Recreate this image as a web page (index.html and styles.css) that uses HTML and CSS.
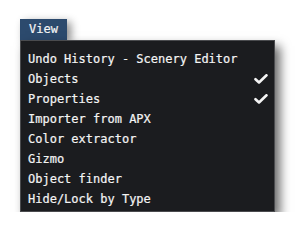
FILE: index.html
```html
<!DOCTYPE html>
<html>
<head>
<meta charset="utf-8">
<link rel="stylesheet" href="styles.css">
</head>
<body>
<div class="wrap">
  <div class="tab">View</div>
  <div class="menu">
    <div class="item"><span>Undo History - Scenery Editor</span></div>
    <div class="item"><span>Objects</span><svg class="check" viewBox="0 0 14 10" width="14" height="10"><path d="M1.5 5.2 L5 8.5 L12.5 1.3" fill="none" stroke="#f4f4f4" stroke-width="2.6" stroke-linecap="round" stroke-linejoin="round"/></svg></div>
    <div class="item"><span>Properties</span><svg class="check" viewBox="0 0 14 10" width="14" height="10"><path d="M1.5 5.2 L5 8.5 L12.5 1.3" fill="none" stroke="#f4f4f4" stroke-width="2.6" stroke-linecap="round" stroke-linejoin="round"/></svg></div>
    <div class="item"><span>Importer from APX</span></div>
    <div class="item"><span>Color extractor</span></div>
    <div class="item"><span>Gizmo</span></div>
    <div class="item"><span>Object finder</span></div>
    <div class="item"><span>Hide/Lock by Type</span></div>
  </div>
</div>
</body>
</html>
```
FILE: styles.css
```css
html, body {
  margin: 0;
  padding: 0;
  background: #ffffff;
}
body {
  font-family: "DejaVu Sans Mono", "Liberation Mono", monospace;
  font-size: 12px;
  color: #f4f4f4;
  -webkit-text-stroke: 0.2px #f4f4f4;
}
.wrap {
  padding: 19px 0 0 20px;
  display: flex;
  flex-direction: column;
  align-items: flex-start;
}
.tab {
  background: #2c4a6d;
  height: 21px;
  line-height: 21px;
  padding: 0 9px;
  box-shadow: 4px 3px 8px rgba(0, 0, 0, 0.45);
}
.menu {
  width: 253px;
  background: #1b1c1f;
  border: 1px solid #4a4b4e;
  padding: 8px 0 2px 0;
  box-shadow: 5px 6px 10px rgba(0, 0, 0, 0.6);
}
.item {
  height: 20px;
  line-height: 20px;
  padding: 0 6px 0 7px;
  display: flex;
  align-items: center;
  justify-content: space-between;
}
.check {
  display: block;
}
```
